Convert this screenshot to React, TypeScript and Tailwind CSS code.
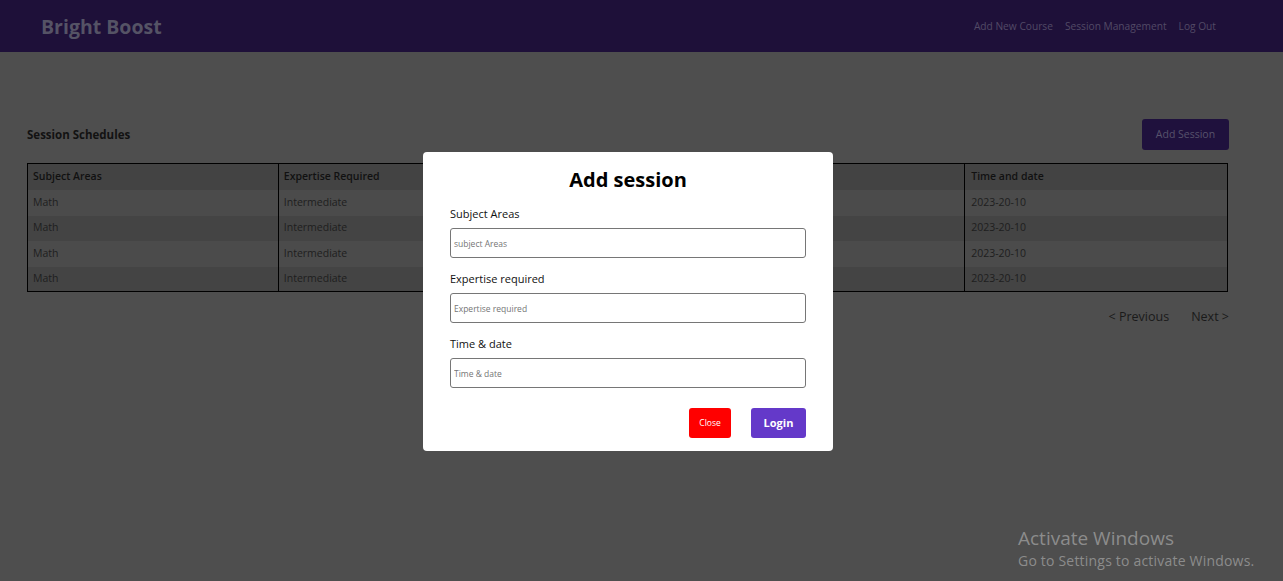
import React from 'react';

// Session management page with the "Add session" modal open

const rows = [
  { subject: 'Math', expertise: 'Intermediate', tutor: '', time: '2023-20-10' },
  { subject: 'Math', expertise: 'Intermediate', tutor: '', time: '2023-20-10' },
  { subject: 'Math', expertise: 'Intermediate', tutor: '', time: '2023-20-10' },
  { subject: 'Math', expertise: 'Intermediate', tutor: '', time: '2023-20-10' },
];

const font = { fontFamily: '"Open Sans", "Noto Sans", sans-serif' };

function Field({ label, placeholder }: { label: string; placeholder: string }) {
  return (
    <div className="flex flex-col">
      <label className="text-[11px] text-[#111] leading-4 mb-[6px]">{label}</label>
      <input
        placeholder={placeholder}
        className="h-[30px] w-full rounded-[3px] border border-[#767676] px-[3px] text-[8.5px] text-[#333] placeholder:text-[#757575] outline-none"
      />
    </div>
  );
}

export default function App() {
  return (
    <div className="relative min-h-[581px] bg-[#4e4e4e] overflow-hidden" style={font}>
      {/* Navbar */}
      <nav className="h-[52px] bg-[#1e1039] flex items-center justify-between pl-[41px] pr-[67px] pt-[1px]">
        <div className="text-[19.5px] font-bold text-[#555365]">Bright Boost</div>
        <div className="flex items-center gap-[12px] text-[10.2px] text-[#524a66]">
          <span>Add New Course</span>
          <span>Session Management</span>
          <span>Log Out</span>
        </div>
      </nav>

      {/* Content */}
      <main className="pl-[27px] pr-[54px] pt-[67px]">
        <div className="flex items-center justify-between mb-[13px]">
          <h2 className="text-[11.5px] font-bold text-[#121212]">Session Schedules</h2>
          <button className="h-[31px] w-[87px] rounded-[3px] bg-[#1f113d] text-[10.5px] text-[#57536c]">Add Session</button>
        </div>

        <table className="w-[1201px] border border-black border-collapse text-[10.5px]">
          <colgroup>
            <col className="w-[251px]" />
            <col className="w-[343px]" />
            <col className="w-[344px]" />
            <col className="w-[263px]" />
          </colgroup>
          <thead>
            <tr className="bg-[#434343] h-[26px]">
              <th className="text-left font-semibold text-[#111] px-[5px] pt-[1px] border-r border-black">Subject Areas</th>
              <th className="text-left font-semibold text-[#111] px-[5px] pt-[1px] border-r border-black">Expertise Required</th>
              <th className="text-left font-semibold text-[#111] px-[5px] pt-[1px] border-r border-black"></th>
              <th className="text-left font-semibold text-[#111] px-[6px] pt-[1px]">Time and date</th>
            </tr>
          </thead>
          <tbody>
            {rows.map((r, i) => (
              <tr key={i} className={i % 2 === 0 ? 'bg-[#4b4b4b] h-[26px]' : 'bg-[#444444] h-[25px]'}>
                <td className="px-[5px] text-[#1e1e1e] border-r border-black">{r.subject}</td>
                <td className="px-[5px] text-[#1e1e1e] border-r border-black">{r.expertise}</td>
                <td className="px-[5px] text-[#1e1e1e] border-r border-black">{r.tutor}</td>
                <td className="px-[6px] text-[#1e1e1e]">{r.time}</td>
              </tr>
            ))}
          </tbody>
        </table>

        <div className="flex justify-end gap-[22px] pt-[16px] text-[12.5px] text-[#1a1a1a]">
          <span>&lt; Previous</span>
          <span>Next &gt;</span>
        </div>
      </main>

      {/* Windows watermark */}
      <div className="absolute left-[1018px] top-[527px] text-[#8c8c8c] leading-tight">
        <div className="text-[19px]">Activate Windows</div>
        <div className="text-[14px] tracking-[0.2px] mt-[1px]">Go to Settings to activate Windows.</div>
      </div>

      {/* Modal */}
      <div className="fixed inset-0 flex items-start justify-center pt-[152px] pr-[27px]">
        <div className="w-[410px] h-[299px] bg-white rounded-[4px] px-[27px] pt-[14px]">
          <h1 className="text-center text-[20px] font-bold text-black leading-7 mb-[12px]">Add session</h1>
          <div className="flex flex-col gap-[13px]">
            <Field label="Subject Areas" placeholder="subject Areas" />
            <Field label="Expertise required" placeholder="Expertise required" />
            <Field label="Time & date" placeholder="Time & date" />
          </div>
          <div className="flex justify-end gap-[20px] mt-[20px]">
            <button className="h-[30px] w-[42px] rounded-[3px] bg-[#ff0000] text-white text-[8.5px]">Close</button>
            <button className="h-[30px] w-[55px] rounded-[3px] bg-[#6439c9] text-white text-[11px] font-bold">Login</button>
          </div>
        </div>
      </div>
    </div>
  );
}
